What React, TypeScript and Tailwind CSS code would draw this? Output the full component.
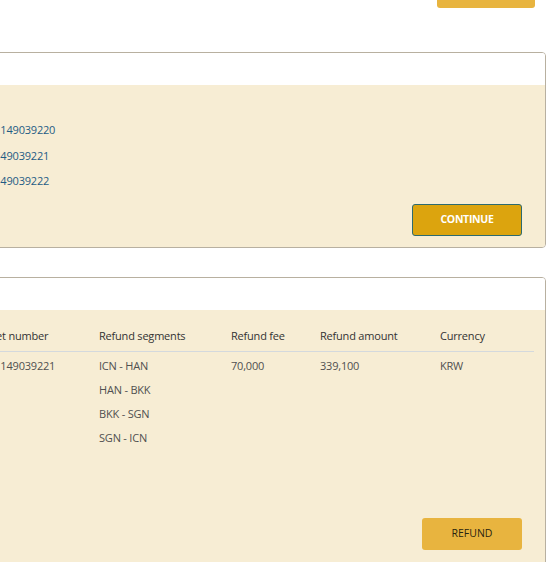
const ticketLinks = ["7381149039220", "738149039221", "738149039222"];

const refundRows = [
  {
    ticket: "7381149039221",
    segments: ["ICN - HAN", "HAN - BKK", "BKK - SGN", "SGN - ICN"],
    fee: "70,000",
    amount: "339,100",
    currency: "KRW",
  },
];

const cols = "grid grid-cols-[298px_132px_89px_120px_1fr]";

export default function App() {
  return (
    <div className="h-[562px] w-full overflow-hidden bg-white font-['Open_Sans',sans-serif] text-[11px] tracking-[-0.2px]">
      <div className="flex justify-end pr-[12px]">
        <button
          type="button"
          className="-mt-[24px] h-[32px] w-[98px] rounded-[3px] bg-[#e8b43f]"
        />
      </div>

      <div className="-ml-[200px] mr-[1px]">
        <section className="mt-[44px] overflow-hidden rounded-[4px] border border-[#b8b0a0]">
          <div className="h-[32px] bg-white" />
          <div className="bg-[#f7edd4] pb-[11px] pt-[32px]">
            <ul className="pl-[175px]">
              {ticketLinks.map((ticket) => (
                <li key={ticket} className="leading-[25.5px]">
                  <a className="text-[#1f5c84]">{ticket}</a>
                </li>
              ))}
            </ul>
            <div className="mt-[10px] flex justify-end pr-[23px]">
              <button
                type="button"
                className="h-[32px] w-[110px] rounded-[3px] border border-[#2d6b70] bg-[#dca40e] text-[10.5px] font-bold tracking-[-0.3px] text-white"
              >
                CONTINUE
              </button>
            </div>
          </div>
        </section>

        <section className="mt-[29px] overflow-hidden rounded-[4px] border border-[#b8b0a0]">
          <div className="h-[32px] bg-white" />
          <div className="h-[260px] bg-[#f7edd4] pt-[11px]">
            <div className={`${cols} mr-[11px] border-b border-[#d4d9dd] py-[8px] font-medium leading-[14px] text-[#333]`}>
              <div className="pl-[176px]">Ticket number</div>
              <div>Refund segments</div>
              <div>Refund fee</div>
              <div>Refund amount</div>
              <div>Currency</div>
            </div>
            {refundRows.map((row) => (
              <div
                key={row.ticket}
                className={`${cols} mr-[11px] pt-[2px] leading-[24px] text-[#505050]`}
              >
                <div className="pl-[175px]">{row.ticket}</div>
                <div>
                  {row.segments.map((s) => (
                    <div key={s}>{s}</div>
                  ))}
                </div>
                <div>{row.fee}</div>
                <div>{row.amount}</div>
                <div>{row.currency}</div>
              </div>
            ))}
            <div className="mt-[68px] flex justify-end pr-[23px]">
              <button
                type="button"
                className="h-[32px] w-[100px] rounded-[3px] bg-[#e8b43f] text-[10.5px] font-medium tracking-normal text-[#2a2410]"
              >
                REFUND
              </button>
            </div>
          </div>
        </section>
      </div>
    </div>
  );
}
